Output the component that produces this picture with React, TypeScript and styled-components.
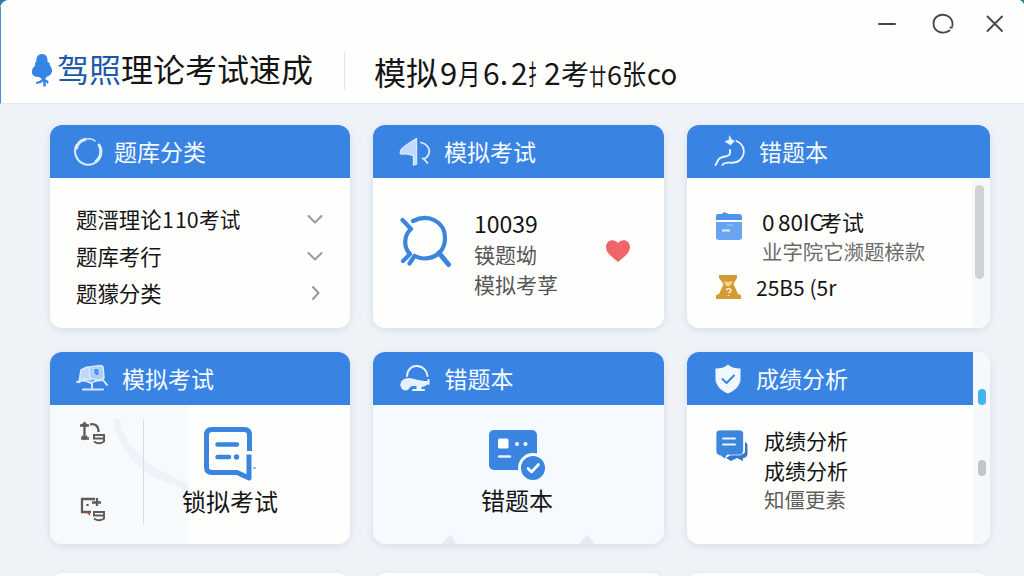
import React from 'react';
import styled, { createGlobalStyle } from 'styled-components';

const GlobalStyle = createGlobalStyle`
  * { box-sizing: border-box; }
  body {
    margin: 0;
    overflow: hidden;
    background: #2f7f9c;
    font-family: "Noto Sans CJK SC", "Noto Sans", sans-serif;
    color: #151515;
  }
`;

const Window = styled.div`
  display: flex;
  flex-direction: column;
  width: 1024px;
  height: 576px;
  overflow: hidden;
  border-radius: 9px 6px 0 0;
  background: #eff3f8;
`;

const TopBar = styled.header`
  display: flex;
  align-items: flex-start;
  height: 104px;
  flex: none;
  padding: 0 20px 0 29px;
  background: #fefefd;
  border-left: 1px solid #4a90c9;
  border-bottom: 1px solid #e3eaef;
`;

const Brand = styled.h1`
  display: flex;
  align-items: center;
  width: 315px;
  height: 38px;
  margin: 52px 0 0;
  border-right: 1px solid #e4e4e6;
  font-size: 32px;
  font-weight: 400;
  line-height: 38px;
  white-space: nowrap;
`;

const BrandName = styled.span`
  margin-top: -7px;
`;

const BrandAccent = styled.span`
  color: #1f5aa8;
`;

const Subtitle = styled.div`
  display: flex;
  align-items: baseline;
  width: 306px;
  margin: 52px 0 0 29px;
  line-height: 38px;
  white-space: nowrap;
`;

const Run = styled.span<{ $size: number; $width: number; $squeeze?: number }>`
  display: inline-block;
  flex: none;
  width: ${p => p.$width}px;
  font-size: ${p => p.$size}px;
  transform: scaleX(${p => p.$squeeze ?? 1});
  transform-origin: left;
`;

const WindowControls = styled.div`
  display: flex;
  align-items: center;
  gap: 32px;
  margin: 12px 0 0 auto;
`;

const Glyph = styled.svg`
  display: block;
  flex: none;
  overflow: visible;
`;

const Board = styled.main`
  display: grid;
  grid-template-columns: 300px 291px 303px;
  grid-template-rows: 203px 192px 60px;
  gap: 24px 23px;
  padding: 21px 0 0 50px;
`;

const Card = styled.section<{ $bg?: string }>`
  display: flex;
  flex-direction: column;
  overflow: hidden;
  border-radius: 12px;
  background: ${p => p.$bg ?? '#fefefd'};
  box-shadow: 0 2px 7px rgba(90, 110, 150, 0.16);
`;

const NextCard = styled(Card)`
  margin-top: 5px;
`;

const CardHead = styled.header<{ $pad: number; $gap: number }>`
  display: flex;
  align-items: center;
  gap: ${p => p.$gap}px;
  height: 53px;
  flex: none;
  padding-left: ${p => p.$pad}px;
  background: #3984e2;
`;

const CardTitle = styled.h2`
  margin: -2px 0 0;
  color: #f6faff;
  font-size: 23px;
  font-weight: 400;
  line-height: 50px;
`;

const TopicList = styled.ul`
  display: flex;
  flex-direction: column;
  margin: 0;
  padding: 22px 26px 0 26px;
  list-style: none;
`;

const Topic = styled.li`
  display: flex;
  align-items: center;
  justify-content: space-between;
  height: 37px;
  font-size: 21.4px;
  white-space: nowrap;
`;

const TopicName = styled.span`
  display: flex;
`;

const StatBody = styled.div`
  display: flex;
  align-items: flex-start;
  padding: 29px 0 0 27px;
`;

const StatText = styled.div`
  display: flex;
  flex-direction: column;
  width: 131px;
  margin-left: 21px;
`;

const Line = styled.div<{ $size?: number; $height?: number; $color?: string }>`
  font-size: ${p => p.$size ?? 21}px;
  line-height: ${p => p.$height ?? 30}px;
  color: ${p => p.$color ?? '#151515'};
  white-space: pre;
`;

const ScrollBody = styled.div`
  display: flex;
  justify-content: space-between;
  flex: 1;
`;

const Entries = styled.div<{ $top: number }>`
  display: flex;
  flex-direction: column;
  padding: ${p => p.$top}px 0 0 28px;
`;

const Entry = styled.div<{ $gap: number }>`
  display: flex;
  align-items: flex-start;
  gap: ${p => p.$gap}px;
`;

const Track = styled.div`
  display: flex;
  justify-content: center;
  width: 18px;
  padding: 7px 3px 0 0;
  background: #f7f8f9;
`;

const Thumb = styled.div`
  width: 9px;
  height: 94px;
  border-radius: 5px;
  background: #d0d1d2;
`;

const SplitBody = styled.div`
  display: flex;
  flex: 1;
  background: linear-gradient(90deg, #f7fafd 0 137px, #fefefd 141px);
`;

const SideTools = styled.div`
  display: flex;
  flex-direction: column;
  gap: 50px;
  width: 94px;
  height: 105px;
  margin-top: 14px;
  padding: 3px 0 0 30px;
  border-right: 1px solid #d9dde4;
`;

const Feature = styled.div<{ $left: number; $top: number; $gap: number }>`
  display: flex;
  flex-direction: column;
  align-items: center;
  gap: ${p => p.$gap}px;
  padding: ${p => p.$top}px 0 0 ${p => p.$left}px;
`;

const CenterBody = styled.div`
  display: flex;
  flex-direction: column;
  align-items: center;
  flex: 1;
  padding: 24px 3px 0 0;
`;

const Notches = styled.div`
  display: flex;
  gap: 122px;
  margin: auto 0 0 2px;
`;

const ResultCard = styled(Card)`
  flex-direction: row;
`;

const ResultMain = styled.div`
  width: 286px;
`;

const ResultRail = styled.div`
  display: flex;
  flex-direction: column;
  align-items: center;
  gap: 55px;
  width: 17px;
  padding-top: 37px;
  background: #f7f8f9;
`;

const Dot = styled.span<{ $color: string }>`
  width: 8px;
  height: 16px;
  border-radius: 4px;
  background: ${p => p.$color};
`;

const SwooshSvg = styled(Glyph)`
  margin-right: -138px;
`;

const stroke = { fill: 'none', strokeLinecap: 'round', strokeLinejoin: 'round' } as const;

const TreeMark = () => (
  <Glyph width="27" height="36" viewBox="0 0 27 36" fill="#3585e3">
    <path d="M12 1C8 1 6 4 6.500 8C5 9 5 11 5 13C3 14 1.500 17 2 20C2.500 23 6 24 9 24L12 26L9.500 28L6 29L6.500 31L11 30L13 28L13.500 34L16 33L15.500 29L18 31L18.500 28L15 26L17 23.500C20 23 22.500 20 22 17C21.500 14 20 13 19.500 11L20 10L17.500 9C18 4 16 1 12 1Z" />
  </Glyph>
);

const Chevron = ({ right }: { right?: boolean }) => (
  <Glyph width="18" height="18" viewBox="0 0 18 18" {...stroke} stroke="#9a9a9a" strokeWidth="2">
    <path d={right ? 'M7 3L12.500 9L7 15' : 'M2.500 6L9 12.500L15.500 6'} />
  </Glyph>
);

const RingIcon = () => (
  <Glyph width="32" height="32" viewBox="0 0 32 32" {...stroke} stroke="#dcecff">
    <path d="M3.500 9C0 16 3 24 10 27.500C17 31 25 27 27.500 20" strokeWidth="2" />
    <path d="M26 9C29.500 14 28 22 23 25.500" strokeWidth="3" />
    <path d="M3.500 12C4.500 7.500 8 4.500 12 3.500" strokeWidth="3.200" />
    <path d="M14 3C17 2.300 20 3 22 5" strokeWidth="1.400" />
  </Glyph>
);

const HornIcon = () => (
  <Glyph width="32" height="32" viewBox="0 0 32 32" {...stroke} stroke="#d8e9ff">
    <path d="M2 18Q0.500 17 2 14Q3.500 11 17.500 2.500V28L14.500 29V19.500Q9 17 2 18Z" fill="#c0dafa" strokeWidth="1.400" />
    <path d="M22 6.500C28 8 32 13 29.500 18.500C28 21.500 25.500 23 23.500 22.500M24.500 22.500L28.500 27" strokeWidth="1.800" />
  </Glyph>
);

const RouteIcon = () => (
  <Glyph width="32" height="32" viewBox="0 0 32 32" {...stroke} stroke="#eaf4ff" strokeWidth="1.900">
    <path d="M1.500 29L4.500 23.500C8 19 16 22 16 17V14M8.500 29C12 23.500 20 30 26 24C32 18 31 9 22.500 5" />
    <path d="M15.500 0L17.500 3.500L20.500 5L16.500 9L11 5.500L15 4Z" fill="#eaf4ff" strokeWidth="0.600" />
  </Glyph>
);

const DeskIcon = () => (
  <Glyph width="32" height="32" viewBox="0 0 32 32" {...stroke} stroke="#d5e8ff" strokeWidth="1.600">
    <path d="M5 7L11 4L15 6V17L8 16L3 19.500Z" fill="#bdd9fa" />
    <path d="M13 4L25 2.500L27 4L28 15L23 17.500L14 15Z" fill="#a9cdf8" />
    <path d="M18 5.500H23V12L20 13L18 10Z" fill="#4e91e4" strokeWidth="0.700" />
    <path d="M1 19C6 16 11 18 15 20C20 17 25 17 27 17L31 22M16 21V26M7 26.500H27" strokeWidth="2" />
  </Glyph>
);

const HeadsetIcon = () => (
  <Glyph width="32" height="32" viewBox="0 0 32 32" {...stroke} stroke="#eef6ff">
    <path d="M7 13C7.500 6 12 2.500 17.500 3C23.500 3.500 27 8 27.500 13" strokeWidth="1.900" />
    <path d="M1 22C0.500 16.500 6 15 12 16C18 17.500 24 19 28.500 18.500C28 22 24 24 19 23C14 22 9.500 22 8.500 26C5 28 1 27 1 22Z" fill="#e6f1ff" strokeWidth="1" />
    <path d="M28.500 17V21M13 27H24" strokeWidth="2" />
    <path d="M19 23V26" strokeWidth="5" strokeLinecap="butt" />
  </Glyph>
);

const ShieldIcon = () => (
  <Glyph width="28" height="32" viewBox="0 0 28 32" {...stroke}>
    <path d="M14 1.500C17 4.500 22 5.500 26.500 5.500V16C26.500 23 20 28 14 30.500C8 28 1.500 23 1.500 16V5.500C6 5.500 11 4.500 14 1.500Z" fill="#f1f7ff" />
    <path d="M8.500 16L12.500 20L20 12.500" stroke="#3984e2" strokeWidth="2" />
  </Glyph>
);

const SearchIcon = () => (
  <Glyph width="53" height="62" viewBox="0 -9 53 62" {...stroke} stroke="#3b85dc" strokeWidth="4.200">
    <path d="M2.500 4L11 13C4 19 3 31 10 38L3 45M13 5C29 -3 45 6 45 22C45 35 36 42.500 24 42.500C20 42.500 17 41 14.500 40L9.500 47.500" />
    <path d="M39 37L48.500 48.500" strokeWidth="5" />
  </Glyph>
);

const HeartIcon = () => (
  <Glyph width="26" height="56" viewBox="0 -32 26 56" fill="#f0646a">
    <path d="M13 23C9 19 1 15 1 8C1 1 9 -1 13 4C17 -1 25 1 25 8C25 15 17 19 13 23Z" />
  </Glyph>
);

const BinderIcon = () => (
  <Glyph width="28" height="36" viewBox="0 -5 28 36">
    <path d="M1 9V5Q1 3 3 3H7L9 1L14 3H24Q27 3 27 6V9Z" fill="#4f94e6" />
    <path d="M1 11H27V26Q27 29 24 29H4Q1 29 1 26Z" fill="#67a6ef" />
    <path d="M12 14H18" stroke="#8ebef5" strokeWidth="1.300" />
    <path d="M7 19.500H15" stroke="#e2effe" strokeWidth="2" />
  </Glyph>
);

const SandglassIcon = () => (
  <Glyph width="27" height="36" viewBox="0 -8 27 36">
    <path d="M4 1H22V4L18.500 10L23 20L26 21V25H1V21L4 20L8.500 10L4 4Z" fill="#d39a35" />
    <path d="M9 7L13 8L18 7L15 12H11Z" fill="#f6d58e" />
    <path d="M11 16Q14 13 16 16Q16 18 13.500 19M13.500 21V22" fill="none" stroke="#fff0cf" strokeWidth="1.700" />
  </Glyph>
);

const LinkTool = () => (
  <Glyph width="26" height="24" viewBox="0 0 26 24" fill="none" stroke="#625b58" strokeWidth="2">
    <path d="M0 3.500H9M4.500 1V17M1 16.500H9M10 2.500C15 1 18.500 4 18.500 10" strokeWidth="2.300" />
    <path d="M1.500 4L4.500 1L7.500 4M2 14L4.500 17L7 14" />
    <path d="M14 13H24V16.500H14ZM14 19.500Q19 23 24 19.500V16" />
  </Glyph>
);

const BoardTool = () => (
  <Glyph width="26" height="26" viewBox="0 0 26 26" fill="none" stroke="#625b58" strokeWidth="2">
    <path d="M11 16H2V3H15M12 6.500H21M17 2V10M7.500 8V10" strokeWidth="2.300" />
    <path d="M6 16H10V20Z" fill="#a84f4a" stroke="none" />
    <path d="M14 16H24V19.500H14ZM14 22.500Q19 26 24 22.500V19" />
  </Glyph>
);

const NoteIcon = () => (
  <Glyph width="52" height="54" viewBox="0 0 52 54" {...stroke} stroke="#3985df">
    <path d="M45.500 24V8Q45.500 2.500 40 2.500H8Q2.500 2.500 2.500 8V40Q2.500 45.500 8 45.500H33L45 51V27.500" strokeWidth="5" strokeLinecap="butt" />
    <path d="M13.500 17.500H33M13.500 30H25" strokeWidth="4.500" />
    <circle cx="32.500" cy="30" r="2.700" fill="#3985df" stroke="none" />
    <path d="M50 41H51" strokeWidth="1.500" />
  </Glyph>
);

const LicenseIcon = () => (
  <Glyph width="58" height="52" viewBox="0 0 58 52" {...stroke}>
    <rect x="1" y="1" width="48" height="40" rx="5" fill="#3985df" />
    <rect x="10" y="9.500" width="10.500" height="10" rx="1.500" fill="#fff" />
    <circle cx="29" cy="15" r="2" fill="#fff" />
    <circle cx="37.500" cy="15" r="2" fill="#fff" />
    <path d="M11 27.500H22" stroke="#e9f3ff" strokeWidth="2.500" />
    <circle cx="45" cy="39" r="13.500" fill="#3985df" stroke="#f6f9fd" strokeWidth="3" />
    <path d="M40 39.500L43.500 43L50.500 35.500" stroke="#fff" strokeWidth="2.700" />
  </Glyph>
);

const CommentIcon = () => (
  <Glyph width="34" height="38" viewBox="0 -4 34 38" {...stroke}>
    <path d="M11 29L17 25H27Q30 25 30 22V13Q33 14 32.500 18V25Q32 29 28 29V32L22 29L16 32Z" fill="#3478cb" />
    <path d="M5 1H24Q28.500 1 28.500 5V21Q28.500 26 24 26H12L10 30L6 27Q1 26 1 22V5Q1 1 5 1Z" fill="#3c86dc" stroke="#fff" strokeWidth="0.700" />
    <path d="M8 9.500H20M8 15.500H20" stroke="#e9f4ff" strokeWidth="1.900" />
  </Glyph>
);

const NotchMark = () => (
  <Glyph width="15" height="9" viewBox="0 0 15 9" fill="#e7eaf1">
    <path d="M0 9L4 4L9 0L15 9Z" />
  </Glyph>
);

const SwooshMark = () => (
  <SwooshSvg width="138" height="139" viewBox="0 0 138 139" fill="#eff2f8">
    <path d="M63 14C67 38 80 57 99 69C112 77 125 80 138 86V78C118 70 96 60 82 42C75 32 71 22 70 14Z" />
  </SwooshSvg>
);

export default function App() {
  return (
    <>
      <GlobalStyle />
      <Window>
        <TopBar>
          <Brand>
            <TreeMark />
            <BrandName><BrandAccent>驾照</BrandAccent>理论考试速成</BrandName>
          </Brand>
          <Subtitle>
            <Run $size={32} $width={66}>模拟</Run>
            <Run $size={31} $width={18}>9</Run>
            <Run $size={28} $width={25} $squeeze={0.8}>月</Run>
            <Run $size={30} $width={28}>6.</Run>
            <Run $size={30} $width={17}>2</Run>
            <Run $size={27} $width={16} $squeeze={0.58}>扌</Run>
            <Run $size={30} $width={17}>2</Run>
            <Run $size={28} $width={28}>考</Run>
            <Run $size={23} $width={18} $squeeze={0.75}>廿</Run>
            <Run $size={27} $width={15}>6</Run>
            <Run $size={28} $width={25} $squeeze={0.86}>张</Run>
            <Run $size={30} $width={30} $squeeze={0.92}>co</Run>
          </Subtitle>
          <WindowControls>
            <Glyph width="18" height="22" viewBox="0 0 18 22" {...stroke} stroke="#454545" strokeWidth="2">
              <path d="M1 12H17" />
            </Glyph>
            <Glyph width="26" height="22" viewBox="-2 0 26 22" {...stroke} stroke="#454545" strokeWidth="1.800">
              <path d="M19.500 18.500C13 23 3.500 20 3.500 11.500C3.500 -0.500 23.500 -0.500 22.500 13.500M20.500 15.500H22" />
            </Glyph>
            <Glyph width="18" height="22" viewBox="0 0 18 22" {...stroke} stroke="#454545" strokeWidth="1.800">
              <path d="M1.500 4.500L16 19M16 4.500L1.500 19" />
            </Glyph>
          </WindowControls>
        </TopBar>

        <Board>
          <Card>
            <CardHead $pad={23} $gap={9}><RingIcon /><CardTitle>题库分类</CardTitle></CardHead>
            <TopicList>
              <Topic>
                <TopicName>
                  <Run $size={21.4} $width={86}>题溍理论</Run>
                  <Run $size={21.4} $width={13}>1</Run>
                  <Run $size={21.4} $width={24}>10</Run>
                  <Run $size={21.4} $width={43} $squeeze={0.97}>考试</Run>
                </TopicName>
                <Chevron />
              </Topic>
              <Topic>题库考行<Chevron /></Topic>
              <Topic>题獴分类<Chevron right /></Topic>
            </TopicList>
          </Card>

          <Card>
            <CardHead $pad={26} $gap={13}><HornIcon /><CardTitle>模拟考试</CardTitle></CardHead>
            <StatBody>
              <SearchIcon />
              <StatText>
                <Line $size={23} $height={32}>10039</Line>
                <Line $color="#555">锳题坳</Line>
                <Line $color="#555">模拟考莩</Line>
              </StatText>
              <HeartIcon />
            </StatBody>
          </Card>

          <Card>
            <CardHead $pad={27} $gap={13}><RouteIcon /><CardTitle>错题本</CardTitle></CardHead>
            <ScrollBody>
              <Entries $top={28}>
                <Entry $gap={19}>
                  <BinderIcon />
                  <div>
                    <Line $size={22}><Run $size={22.5} $width={16}>0</Run><Run $size={22.5} $width={42}>80IC</Run>考试</Line>
                    <Line $size={20.4} $color="#6b6b6b">业字院它濒题榇款</Line>
                  </div>
                </Entry>
                <Entry $gap={14}>
                  <SandglassIcon />
                  <Line $size={21} $height={42}>25B5 (5r</Line>
                </Entry>
              </Entries>
              <Track><Thumb /></Track>
            </ScrollBody>
          </Card>

          <Card>
            <CardHead $pad={26} $gap={14}><DeskIcon /><CardTitle>模拟考试</CardTitle></CardHead>
            <SplitBody>
              <SwooshMark />
              <SideTools><LinkTool /><BoardTool /></SideTools>
              <Feature $left={38} $top={22} $gap={2}>
                <NoteIcon />
                <Line $size={24} $height={36}>锁拟考试</Line>
              </Feature>
            </SplitBody>
          </Card>

          <Card $bg="#f6f9fd">
            <CardHead $pad={26.5} $gap={13}><HeadsetIcon /><CardTitle>错题本</CardTitle></CardHead>
            <CenterBody>
              <LicenseIcon />
              <Line $size={24} $height={38}>错题本</Line>
              <Notches><NotchMark /><NotchMark /></Notches>
            </CenterBody>
          </Card>

          <ResultCard>
            <ResultMain>
              <CardHead $pad={27} $gap={14}><ShieldIcon /><CardTitle>成绩分析</CardTitle></CardHead>
              <Entries $top={20}>
                <Entry $gap={15}>
                  <CommentIcon />
                  <div>
                    <Line>成绩分析</Line>
                    <Line>成绩分析</Line>
                    <Line $size={20.5} $height={28} $color="#5f5f5f">知僵更素</Line>
                  </div>
                </Entry>
              </Entries>
            </ResultMain>
            <ResultRail><Dot $color="#45b3ee" /><Dot $color="#c3c4c7" /></ResultRail>
          </ResultCard>

          <NextCard />
          <NextCard />
          <NextCard />
        </Board>
      </Window>
    </>
  );
}
